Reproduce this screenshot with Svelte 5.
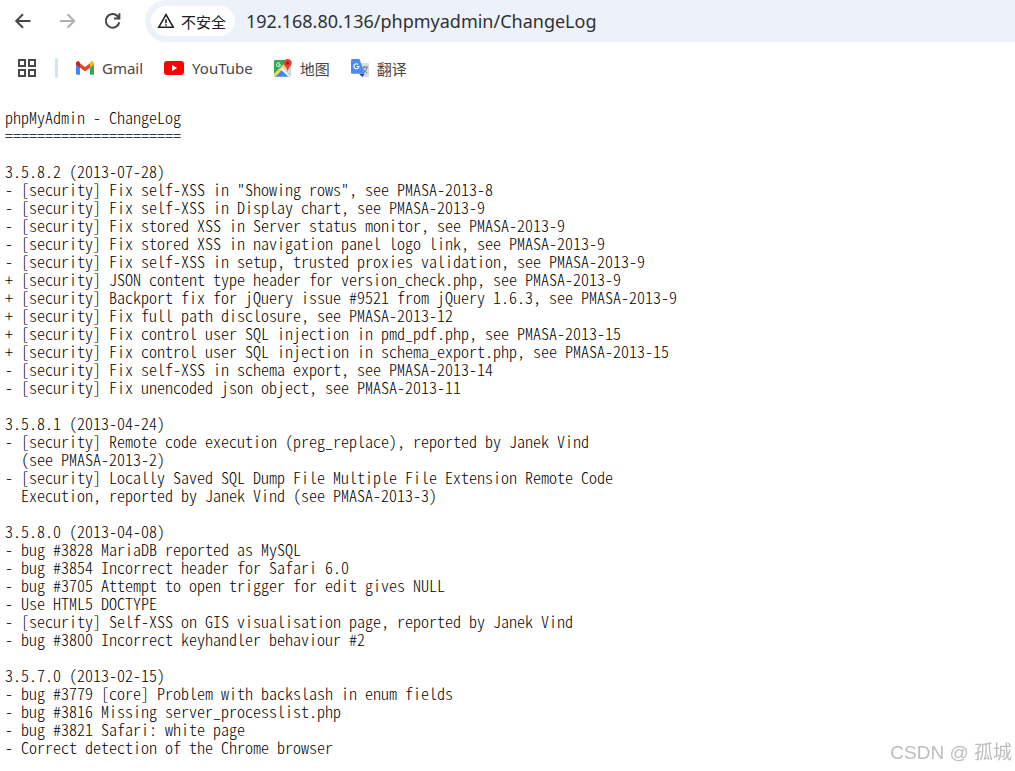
<script>
    let url = $state('192.168.80.136/phpmyadmin/ChangeLog');

    const changelog = `phpMyAdmin - ChangeLog
======================

3.5.8.2 (2013-07-28)
- [security] Fix self-XSS in "Showing rows", see PMASA-2013-8
- [security] Fix self-XSS in Display chart, see PMASA-2013-9
- [security] Fix stored XSS in Server status monitor, see PMASA-2013-9
- [security] Fix stored XSS in navigation panel logo link, see PMASA-2013-9
- [security] Fix self-XSS in setup, trusted proxies validation, see PMASA-2013-9
+ [security] JSON content type header for version_check.php, see PMASA-2013-9
+ [security] Backport fix for jQuery issue #9521 from jQuery 1.6.3, see PMASA-2013-9
+ [security] Fix full path disclosure, see PMASA-2013-12
+ [security] Fix control user SQL injection in pmd_pdf.php, see PMASA-2013-15
+ [security] Fix control user SQL injection in schema_export.php, see PMASA-2013-15
- [security] Fix self-XSS in schema export, see PMASA-2013-14
- [security] Fix unencoded json object, see PMASA-2013-11

3.5.8.1 (2013-04-24)
- [security] Remote code execution (preg_replace), reported by Janek Vind
  (see PMASA-2013-2)
- [security] Locally Saved SQL Dump File Multiple File Extension Remote Code
  Execution, reported by Janek Vind (see PMASA-2013-3)

3.5.8.0 (2013-04-08)
- bug #3828 MariaDB reported as MySQL
- bug #3854 Incorrect header for Safari 6.0
- bug #3705 Attempt to open trigger for edit gives NULL
- Use HTML5 DOCTYPE
- [security] Self-XSS on GIS visualisation page, reported by Janek Vind
- bug #3800 Incorrect keyhandler behaviour #2

3.5.7.0 (2013-02-15)
- bug #3779 [core] Problem with backslash in enum fields
- bug #3816 Missing server_processlist.php
- bug #3821 Safari: white page
- Correct detection of the Chrome browser`;
</script>

<header>
    <div class="toolbar">
        <button class="nav" aria-label="Back">
            <svg width="18" height="18" viewBox="0 0 18 18"><path d="M16.5 9H2.5M9 2.2 2.2 9 9 15.8" /></svg>
        </button>
        <button class="nav" aria-label="Forward" disabled>
            <svg width="18" height="18" viewBox="0 0 18 18"><path d="M1 9h14M8.5 2.2 15.3 9 8.5 15.8" /></svg>
        </button>
        <button class="nav" aria-label="Reload">
            <svg width="18" height="18" viewBox="0 0 18 18"><path d="M15.3 10.2A6.8 6.8 0 1 1 13.6 4.2L15 5.8M15.4 1.2v5.4H10" /></svg>
        </button>
        <div class="omnibox">
            <button class="site">
                <svg width="18" height="18" viewBox="0 0 18 18">
                    <path d="M9 2.6 1.8 15.2h14.4z" fill="none" stroke="#202124" stroke-width="1.6" />
                    <path d="M9 7.2v4M9 12.2v1.6" stroke="#202124" stroke-width="1.6" />
                </svg>
                不安全
            </button>
            <input type="text" aria-label="Address" spellcheck="false" bind:value={url} />
        </div>
    </div>

    <nav class="bookmarks">
        <button class="apps" aria-label="Apps">
            <svg width="18" height="18" viewBox="0 0 18 18" fill="none" stroke="#474747" stroke-width="2">
                <path d="M1 1h6v6H1zM11 1h6v6h-6zM1 11h6v6H1zM11 11h6v6h-6z" />
            </svg>
        </button>
        <span class="divider"></span>
        <a href="#gmail">
            <svg width="18" height="18" viewBox="0 0 18 18">
                <path d="M0 5v9.5q0 1.3 1.3 1.3H4V7.5z" fill="#4285f4" />
                <path d="M14 7.5v8.3h2.7q1.3 0 1.3-1.3V5z" fill="#34a853" />
                <path d="M14 4.2v4.6l4-3V4.3c0-2-2-2.6-3.4-1.6z" fill="#fbbc04" />
                <path d="M4 8.8V4.2l5 3.7 5-3.7v4.6l-5 3.8z" fill="#ea4335" />
                <path d="M0 4.3v1.5l4 3V4.2L3.4 2.7C2 1.7 0 2.3 0 4.3z" fill="#c5221f" />
            </svg>
            Gmail
        </a>
        <a href="#youtube">
            <svg width="20" height="18" viewBox="0 0 20 18">
                <rect y="2" width="20" height="14" rx="3.2" fill="#f00" />
                <path d="m8 6 5.2 3L8 12z" fill="#fff" />
            </svg>
            YouTube
        </a>
        <a href="#maps">
            <svg width="18" height="18" viewBox="0 0 18 18">
                <rect y="1" width="16.5" height="16.5" rx="1.4" fill="#34a853" />
                <path d="M.6 17 8.4 9.3l7.9 7.9-.9.3H1.4z" fill="#4285f4" />
                <path d="M8.6 9.2 15 3l1.5 1v12.6z" fill="#dadce0" />
                <path d="M0 14.8 13 2l2 2.1L1.5 17.5Q0 17.3 0 16z" fill="#fdd663" />
                <path d="m7 10.6 1.4-1.5 8 8-.9.4h-1.3z" fill="#fff" />
                <path d="M6 4.5a1.9 1.9 0 1 0 .4 1.3H4.6" fill="none" stroke="#fff" stroke-width="1" />
                <path d="M13.7 0C11.3 0 9.6 1.8 9.6 4c0 3.2 3.4 4 4.1 9 .7-5 4.1-5.8 4.1-9 0-2.2-1.7-4-4.1-4z" fill="#ea4335" />
                <circle cx="13.7" cy="4" r="1.5" fill="#8c1d18" />
            </svg>
            地图
        </a>
        <a href="#translate">
            <svg width="18" height="18" viewBox="0 0 18 18">
                <path d="M7 4h10q1 0 1 1v12q0 1-1 1h-6z" fill="#dadce0" />
                <path d="M10.5 8.2H17M13.7 7v1.2M16 8.5c-.7 3-2.3 4.8-4.2 6M12 9c.8 2.4 2.2 4 4.2 5.2" fill="none" stroke="#5f7580" stroke-width="1" />
                <path d="m8 14.7 3.4 3.3 2.2-3.3z" fill="#3730b8" />
                <path d="M1.2 0h7.3l5.1 14.7H1.2Q0 14.7 0 13.5V1.2Q0 0 1.2 0z" fill="#4c8bf5" />
                <path d="M7.2 5.5a2.5 2.5 0 1 0 .7 2H5.6" fill="none" stroke="#fff" stroke-width="1.2" />
            </svg>
            翻译
        </a>
    </nav>
</header>

<pre>{changelog}</pre>

<div class="watermark">CSDN @ 孤城</div>

<style>
    :global(body) {
        background: #fff;
        font-family: "Noto Sans", "Noto Sans CJK SC", sans-serif;
    }

    button {
        border: none;
        background: none;
        padding: 0;
        font: inherit;
        cursor: pointer;
    }

    svg {
        display: block;
        flex: none;
    }

    .toolbar {
        display: flex;
        align-items: center;
        height: 42px;
        padding-left: 14px;
    }

    .nav {
        width: 18px;
        margin-right: 27px;
    }

    .nav path {
        fill: none;
        stroke: #474747;
        stroke-width: 2;
    }

    .nav:disabled path {
        stroke: #b0b0b0;
    }

    .omnibox {
        display: flex;
        flex: 1;
        align-items: center;
        gap: 11px;
        height: 42px;
        margin-left: -4px;
        padding-left: 6px;
        box-sizing: border-box;
        border-radius: 21px 0 0 21px;
        background: #edf1fa;
    }

    .site {
        display: flex;
        flex: none;
        align-items: center;
        gap: 6px;
        height: 30px;
        padding: 0 9px 0 6px;
        border-radius: 15px;
        background: #fff;
        color: #202124;
        font-size: 15px;
    }

    input {
        flex: 1;
        min-width: 0;
        padding: 0;
        border: none;
        outline: none;
        background: none;
        color: #303134;
        font-family: "Noto Sans", sans-serif;
        font-size: 18px;
    }

    .bookmarks {
        display: flex;
        align-items: center;
        height: 52px;
        padding-left: 18px;
    }

    .divider {
        width: 3px;
        height: 20px;
        margin: 0 18px 0 19px;
        border-radius: 2px;
        background: #d3e3fd;
    }

    .bookmarks a {
        display: flex;
        align-items: center;
        gap: 8px;
        margin-right: 21px;
        color: #474747;
        font-size: 15px;
        text-decoration: none;
    }

    pre {
        margin: 14px 5px 0;
        color: #000;
        font-family: "Noto Sans CJK SC", monospace;
        font-feature-settings: "hwid";
        font-variant-ligatures: none;
        font-weight: 300;
        font-size: 16px;
        line-height: 18px;
    }

    .watermark {
        position: fixed;
        right: 3px;
        bottom: 4px;
        color: #bdbdbd;
        font-family: "Liberation Sans", "Noto Sans CJK SC", sans-serif;
        font-size: 19px;
        line-height: 28px;
    }
</style>
